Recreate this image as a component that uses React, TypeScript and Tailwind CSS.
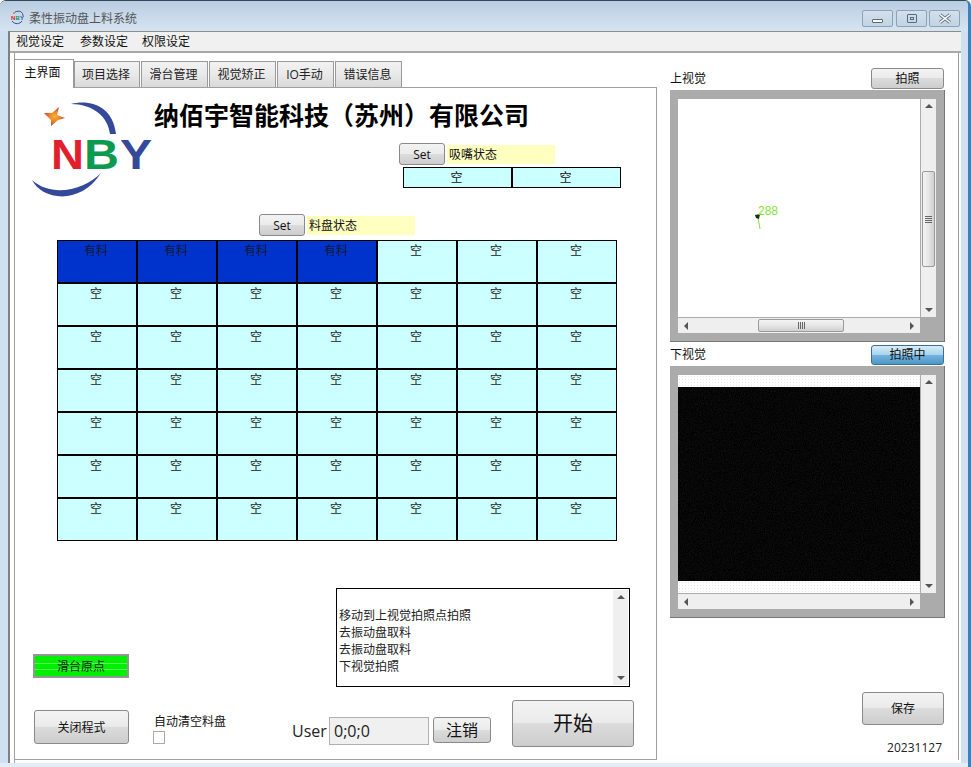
import React from "react";

const FONT = "[font-family:'Open_Sans','Noto_Sans_CJK_SC',sans-serif]";
const GREY_BTN =
  "bg-[linear-gradient(#f3f3f3_0%,#ebebeb_48%,#dcdcdc_50%,#cdcdcd_100%)] border border-[#8a8a8a] rounded-[3px] text-[#111] flex items-center justify-center";

function Arrow({ dir }: { dir: "up" | "down" | "left" | "right" }) {
  const pts = {
    up: "0,5 4,1 8,5",
    down: "0,1 8,1 4,5",
    left: "5,0 5,8 1,4",
    right: "1,0 1,8 5,4",
  }[dir];
  const vertical = dir === "up" || dir === "down";
  return (
    <svg width={vertical ? 8 : 6} height={vertical ? 6 : 8} viewBox={vertical ? "0 0 8 6" : "0 0 6 8"}>
      <polygon points={pts} fill="#555" />
    </svg>
  );
}

function VScroll({ thumb }: { thumb?: boolean }) {
  return (
    <div className="w-[15px] h-full bg-[#efefef] flex flex-col items-center justify-between py-[4px] relative">
      <Arrow dir="up" />
      {thumb && (
        <div className="absolute left-[1px] top-[72px] w-[13px] h-[96px] rounded-[2px] border border-[#9a9a9a] bg-[linear-gradient(90deg,#f4f4f4,#e6e6e6_50%,#cfcfcf)] flex flex-col items-center justify-center gap-[1px]">
          <div className="w-[7px] h-px bg-[#666]" />
          <div className="w-[7px] h-px bg-[#666]" />
          <div className="w-[7px] h-px bg-[#666]" />
          <div className="w-[7px] h-px bg-[#666]" />
        </div>
      )}
      <Arrow dir="down" />
    </div>
  );
}

function HScroll({ thumb }: { thumb?: boolean }) {
  return (
    <div className="h-[15px] w-full bg-[#efefef] flex items-center justify-between px-[5px] relative">
      <Arrow dir="left" />
      {thumb && (
        <div className="absolute left-[80px] top-[1px] w-[86px] h-[13px] rounded-[2px] border border-[#9a9a9a] bg-[linear-gradient(#f4f4f4,#e6e6e6_50%,#cfcfcf)] flex items-center justify-center gap-[1px]">
          <div className="h-[7px] w-px bg-[#666]" />
          <div className="h-[7px] w-px bg-[#666]" />
          <div className="h-[7px] w-px bg-[#666]" />
          <div className="h-[7px] w-px bg-[#666]" />
        </div>
      )}
      <Arrow dir="right" />
    </div>
  );
}

function Logo() {
  return (
    <svg width="124" height="100" viewBox="30 100 124 100" className="block">
      <defs>
        <radialGradient id="starFill" cx="0.5" cy="0.5" r="0.5">
          <stop offset="0" stopColor="#f7b52c" />
          <stop offset="0.45" stopColor="#ee8a2c" />
          <stop offset="1" stopColor="#c8402c" />
        </radialGradient>
      </defs>
      <path d="M71 104 C90 99 113 106 116 134 L110 134 C108 116 92 104 71 104 Z" fill="#35499b" />
      <path d="M32 180 C42 200 80 206 101 173 C84 190 52 198 32 180 Z" fill="#35499b" />
      <polygon points="44,113 52,113 59,107 57,115 65,118 58,120 51,126 51,120" fill="url(#starFill)" />
      <text x="51" y="169" fontFamily="'Liberation Sans',sans-serif" fontWeight="700" fontSize="42" fill="#e21f2f" textLength="33" lengthAdjust="spacingAndGlyphs">N</text>
      <text x="84" y="169" fontFamily="'Liberation Sans',sans-serif" fontWeight="700" fontSize="42" fill="#0b9a50" textLength="35" lengthAdjust="spacingAndGlyphs">B</text>
      <text x="120" y="169" fontFamily="'Liberation Sans',sans-serif" fontWeight="700" fontSize="42" fill="#35499b" textLength="32" lengthAdjust="spacingAndGlyphs">Y</text>
    </svg>
  );
}

function MiniLogo() {
  return (
    <svg width="15" height="15" viewBox="0 0 15 15">
      <path d="M4 2 C9 0 12 2 12 6" stroke="#35499b" strokeWidth="1" fill="none" />
      <path d="M1 11 C4 15 9 14 11 11" stroke="#35499b" strokeWidth="1" fill="none" />
      <circle cx="3" cy="3" r="1" fill="#e8712a" />
      <text x="0" y="10" fontFamily="'Liberation Sans',sans-serif" fontWeight="700" fontSize="6" fill="#e21f2f">N</text>
      <text x="4.5" y="10" fontFamily="'Liberation Sans',sans-serif" fontWeight="700" fontSize="6" fill="#0b9a50">B</text>
      <text x="9" y="10" fontFamily="'Liberation Sans',sans-serif" fontWeight="700" fontSize="6" fill="#35499b">Y</text>
    </svg>
  );
}

function Noise() {
  return (
    <svg width="242" height="194" className="block">
      <filter id="camNoise" colorInterpolationFilters="sRGB">
        <feTurbulence type="fractalNoise" baseFrequency="0.9" numOctaves="2" seed="4" />
        <feColorMatrix type="matrix" values="0 0 0 0.12 -0.035  0 0 0 0.12 -0.035  0 0 0 0.12 -0.035  0 0 0 0 1" />
      </filter>
      <rect width="242" height="194" filter="url(#camNoise)" />
    </svg>
  );
}

const TABS: [string, string][] = [
  ["项目选择", "w-[66px]"],
  ["滑台管理", "w-[67px]"],
  ["视觉矫正", "w-[67px]"],
  ["IO手动", "w-[57px]"],
  ["错误信息", "w-[67px]"],
];

const TRAY = Array.from({ length: 49 }, (_, i) => i < 4);

function WinButton({ children, className }: { children: React.ReactNode; className: string }) {
  return (
    <div className={`h-[17px] border border-[#8ea2b6] rounded-[2px] bg-[linear-gradient(#d3e0ec,#c2d3e3)] flex items-center justify-center ${className}`}>
      {children}
    </div>
  );
}

export default function App() {
  return (
    <div className={`w-[971px] h-[767px] overflow-hidden flex flex-col bg-[#cfe0f0] border-t border-t-[#33475c] border-r-[3px] border-r-[#3f7fb5] rounded-t-[6px] text-[12px] leading-[17px] text-[#111] ${FONT}`}>
      {/* title bar */}
      <div className="h-[30px] shrink-0 flex items-center bg-[linear-gradient(#b9cde1,#d6e4f1)] pl-[11px] pr-[8px]">
        <div className="mt-[3px]">
          <MiniLogo />
        </div>
        <span className="ml-[3px] mt-[4px] text-[#555] text-[12px]">柔性振动盘上料系统</span>
        <div className="ml-auto flex gap-[2px] mt-[5px]">
          <WinButton className="w-[31px] mr-[1px]">
            <div className="w-[11px] h-[4px] border border-[#5a6a7a] rounded-[1px] mt-[5px] bg-white" />
          </WinButton>
          <WinButton className="w-[31px]">
            <div className="w-[10px] h-[9px] border border-[#5a6a7a] rounded-[1px] flex items-center justify-center">
              <div className="w-[4px] h-[3px] border border-[#5a6a7a]" />
            </div>
          </WinButton>
          <WinButton className="w-[31px]">
            <svg width="14" height="11" viewBox="0 0 14 11">
              <path d="M2 1.5 L12 9.5 M12 1.5 L2 9.5" stroke="#667788" strokeWidth="3.4" fill="none" />
              <path d="M2 1.5 L12 9.5 M12 1.5 L2 9.5" stroke="#ffffff" strokeWidth="1.6" fill="none" />
            </svg>
          </WinButton>
        </div>
      </div>

      {/* client */}
      <div className="ml-[8px] mr-[7px] h-[732px] border-t border-t-[#8c8c8c] border-l-2 border-l-[#808080] bg-white flex flex-col">
        <div className="h-[21px] shrink-0 bg-[#f0f0f0] border-b-2 border-b-[#a8a8a8] flex items-center pl-[6px]">
          <span>视觉设定</span>
          <span className="ml-[16px]">参数设定</span>
          <span className="ml-[14px]">权限设定</span>
        </div>

        <div className="flex-1 flex">
          {/* left column with tab control */}
          <div className="ml-[4px] w-[643px] border-l border-l-[#a0a0a0] flex flex-col">
            <div className="h-[34px] shrink-0 flex items-end">
              <div className="w-[60px] h-[29px] bg-white border border-[#9a9a9a] border-b-0 text-center pt-[4px] pr-[3px] relative top-px -ml-px z-10">主界面</div>
              {TABS.map(([t, w]) => (
                <div key={t} className={`${w} h-[26px] mr-[1px] bg-[linear-gradient(#f2f2f2,#e9e9e9_50%,#d9d9d9)] border border-[#9a9a9a] border-b-0 text-center pt-[4px] pr-[2px] text-[#222]`}>
                  {t}
                </div>
              ))}
            </div>
            <div className="flex-1 border border-[#a0a0a0] border-l-0 mb-[3px] flex flex-col">
              {/* header */}
              <div className="flex pl-[15px] pt-[12px] h-[110px]">
                <Logo />
                <div className="flex flex-col">
                  <div className="-mt-[2px] h-[32px] text-[25px] leading-[32px] font-bold text-black whitespace-nowrap [font-family:'Noto_Sans_CJK_SC',sans-serif]">
                    纳佰宇智能科技<span className="[font-family:'Noto_Sans_CJK_TC',sans-serif]">（</span>苏州<span className="[font-family:'Noto_Sans_CJK_TC',sans-serif]">）</span>有限公司
                  </div>
                  <div className="mt-[13px] ml-[245px] flex items-center">
                    <div className={`${GREY_BTN} w-[46px] h-[22px]`}>Set</div>
                    <div className="ml-[2px] w-[108px] h-[19px] bg-[#ffffc0] pl-[2px] leading-[19px]">吸嘴状态</div>
                  </div>
                  <div className="mt-[2px] ml-[249px] w-[218px] bg-black p-px grid grid-cols-2 gap-[2px]">
                    <div className="h-[19px] bg-[#ccffff] text-center pr-[2px] leading-[19px]">空</div>
                    <div className="h-[19px] bg-[#ccffff] text-center pr-[2px] leading-[19px]">空</div>
                  </div>
                </div>
              </div>

              <div className="mt-[16px] ml-[244px] flex items-center">
                <div className={`${GREY_BTN} w-[46px] h-[22px]`}>Set</div>
                <div className="ml-[2px] w-[108px] h-[19px] bg-[#ffffc0] pl-[2px] leading-[19px]">料盘状态</div>
              </div>

              {/* tray */}
              <div className="mt-[4px] ml-[42px] w-[560px] bg-black p-px grid grid-cols-7 gap-[2px]">
                {TRAY.map((full, i) => (
                  <div key={i} className={`h-[41px] text-center pt-[1px] pr-[2px] ${full ? "bg-[#0033cc] text-[#111a30]" : "bg-[#ccffff] text-[#222]"}`}>
                    {full ? "有料" : "空"}
                  </div>
                ))}
              </div>

              {/* log row */}
              <div className="mt-[47px] flex items-start">
                <div className="ml-[18px] mt-[66px] w-[96px] h-[24px] border-2 border-[#969696]">
                  <div className="w-full h-full bg-[#00f000] bg-[linear-gradient(transparent_7px,#5cf55c_7px,#5cf55c_8px,transparent_8px,transparent_13px,#5cf55c_13px,#5cf55c_14px,transparent_14px)] flex items-center justify-center text-[#222]">
                    滑台原点
                  </div>
                </div>
                <div className="ml-[207px] w-[294px] h-[99px] border border-black flex">
                  <div className="flex-1 pl-[2px] pt-[18px] text-[#222]">
                    <div>移动到上视觉拍照点拍照</div>
                    <div>去振动盘取料</div>
                    <div>去振动盘取料</div>
                    <div>下视觉拍照</div>
                  </div>
                  <div className="h-[95px] mt-[1px] mr-px">
                    <VScroll />
                  </div>
                </div>
              </div>

              {/* bottom row */}
              <div className="mt-[13px] flex items-start">
                <div className={`${GREY_BTN} ml-[19px] mt-[10px] w-[95px] h-[34px]`}>关闭程式</div>
                <div className="ml-[25px] w-[138px] mt-[13px] flex flex-col">
                  <span>自动清空料盘</span>
                  <div className="mt-[1px] -ml-px w-[12px] h-[13px] border border-[#aaa] bg-white" />
                </div>
                <span className="mt-[20px] w-[37px] text-[16px] leading-[22px] text-[#222]">User</span>
                <div className="mt-[17px] w-[100px] h-[28px] border border-[#b0b0b0] bg-[#f0f0f0] pl-[4px] text-[16px] leading-[26px] text-[#222]">0;0;0</div>
                <div className={`${GREY_BTN} ml-[4px] mt-[17px] w-[58px] h-[26px] text-[16px]`}>注销</div>
                <div className={`${GREY_BTN} ml-[21px] w-[122px] h-[47px] text-[20px]`}>开始</div>
              </div>
            </div>
          </div>

          {/* right column */}
          <div className="ml-[13px] w-[275px] flex flex-col">
            <div className="mt-[15px] h-[22px] flex items-start justify-between pr-px">
              <span className="mt-[2px]">上视觉</span>
              <div className={`${GREY_BTN} w-[73px] h-[21px]`}>拍照</div>
            </div>
            <div className="h-[252px] bg-[#ababab] border-r border-b border-r-[#777] border-b-[#777] pl-[8px] pt-[9px]">
              <div className="flex h-[218px]">
                <div className="w-[242px] h-[218px] bg-white relative">
                  <svg width="30" height="40" viewBox="0 0 30 40" className="absolute left-[75px] top-[104px]">
                    <path d="M5 14 L8 10 M5 14 L7 26" stroke="#84e23a" strokeWidth="1" fill="none" />
                    <path d="M2 12 L7 11 L6 16 L3 15 Z" fill="#14301a" />
                    <text x="5" y="12" fontFamily="'Liberation Sans',sans-serif" fontSize="12" fill="#84e23a">288</text>
                  </svg>
                </div>
                <div className="ml-px">
                  <VScroll thumb />
                </div>
              </div>
              <div className="w-[242px] mt-px">
                <HScroll thumb />
              </div>
            </div>

            <div className="h-[24px] flex items-center justify-between pr-px">
              <span>下视觉</span>
              <div className="w-[73px] h-[20px] mt-[1px] border border-[#3a6f9a] rounded-[3px] bg-[linear-gradient(#d9edf9,#a6d3ee_50%,#72b3dc_52%,#4f96c6)] text-center leading-[18px] text-[#111]">拍照中</div>
            </div>
            <div className="h-[252px] bg-[#ababab] border-r border-b border-r-[#777] border-b-[#777] pl-[8px] pt-[9px]">
              <div className="flex h-[218px]">
                <div className="w-[242px] h-[218px] flex flex-col">
                  <div className="h-[12px] bg-white bg-[radial-gradient(#e6e6e6_1px,transparent_1px)] bg-[length:3px_3px]" />
                  <div className="h-[194px] bg-[#070707]">
                    <Noise />
                  </div>
                  <div className="h-[12px] bg-white bg-[radial-gradient(#e6e6e6_1px,transparent_1px)] bg-[length:3px_3px]" />
                </div>
                <div className="ml-px">
                  <VScroll />
                </div>
              </div>
              <div className="w-[242px] mt-px">
                <HScroll />
              </div>
            </div>

            <div className={`${GREY_BTN} mt-[74px] ml-[192px] w-[82px] h-[33px]`}>保存</div>
            <div className="mt-[14px] w-[272px] text-right text-[#222]">20231127</div>
          </div>

          <div className="ml-auto w-[3px] border-l border-l-[#9c9c9c] mb-[3px]" />
        </div>
      </div>
      <div className="flex-1 bg-[#e4edf6]" />
    </div>
  );
}
